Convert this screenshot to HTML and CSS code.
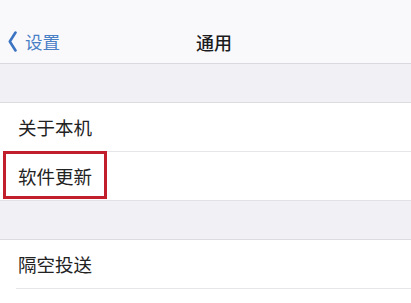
FILE: index.html
```html
<!DOCTYPE html>
<html lang="zh">
<head>
<meta charset="utf-8">
<link rel="stylesheet" href="styles.css">
</head>
<body>
<div class="screen">
  <header class="nav">
    <div class="back">
      <svg class="chev" width="9" height="21" viewBox="0 0 9 21"><polyline points="7.5,1.5 1.8,10.5 7.5,19.5" fill="none" stroke="#3b74c2" stroke-width="2.6" stroke-linecap="round" stroke-linejoin="round"/></svg>
      <span class="back-text">设置</span>
    </div>
    <div class="title">通用</div>
  </header>
  <div class="gap"></div>
  <section class="group">
    <div class="row"><span>关于本机</span></div>
    <div class="row last"><span>软件更新</span><div class="mark"></div></div>
  </section>
  <div class="gap gap2"></div>
  <section class="group">
    <div class="row"><span>隔空投送</span></div>
  </section>
</div>
</body>
</html>
```
FILE: styles.css
```css
* { box-sizing: border-box; }
html, body { margin: 0; padding: 0; background: #ffffff; }
body { font-family: "Noto Sans CJK SC", "Noto Sans", sans-serif; width: 411px; height: 303px; overflow: hidden; }
.screen { display: flex; flex-direction: column; }
.nav {
  height: 64px;
  padding-top: 20px;
  background: #f9f9fb;
  border-bottom: 1px solid #d9d9de;
  display: flex;
  align-items: center;
}
.back { display: flex; align-items: center; padding-left: 8px; gap: 8px; height: 44px; }
.chev { display: block; }
.back-text { font-size: 17.5px; color: #4a80c6; line-height: 1; }
.title { margin-left: 136px; font-size: 18px; color: #1c1c1e; line-height: 1; font-weight: 500; }
.gap { height: 39px; background: #f1f0f5; border-bottom: 1px solid #dcdce0; }
.gap2 { height: 40px; border-top: 1px solid #e2e2e6; }
.group { background: #ffffff; }
.row {
  height: 49px;
  margin-left: 16px;
  padding-left: 2px;
  display: flex;
  align-items: center;
  font-size: 18.5px;
  color: #222222;
  border-bottom: 1px solid #e6e6ea;
  position: relative;
}
.row.last { height: 48px; border-bottom: none; }
.mark {
  position: absolute;
  left: -13px;
  top: -1px;
  width: 104px;
  height: 48px;
  border: 3.5px solid #c21f2d;
}
```
